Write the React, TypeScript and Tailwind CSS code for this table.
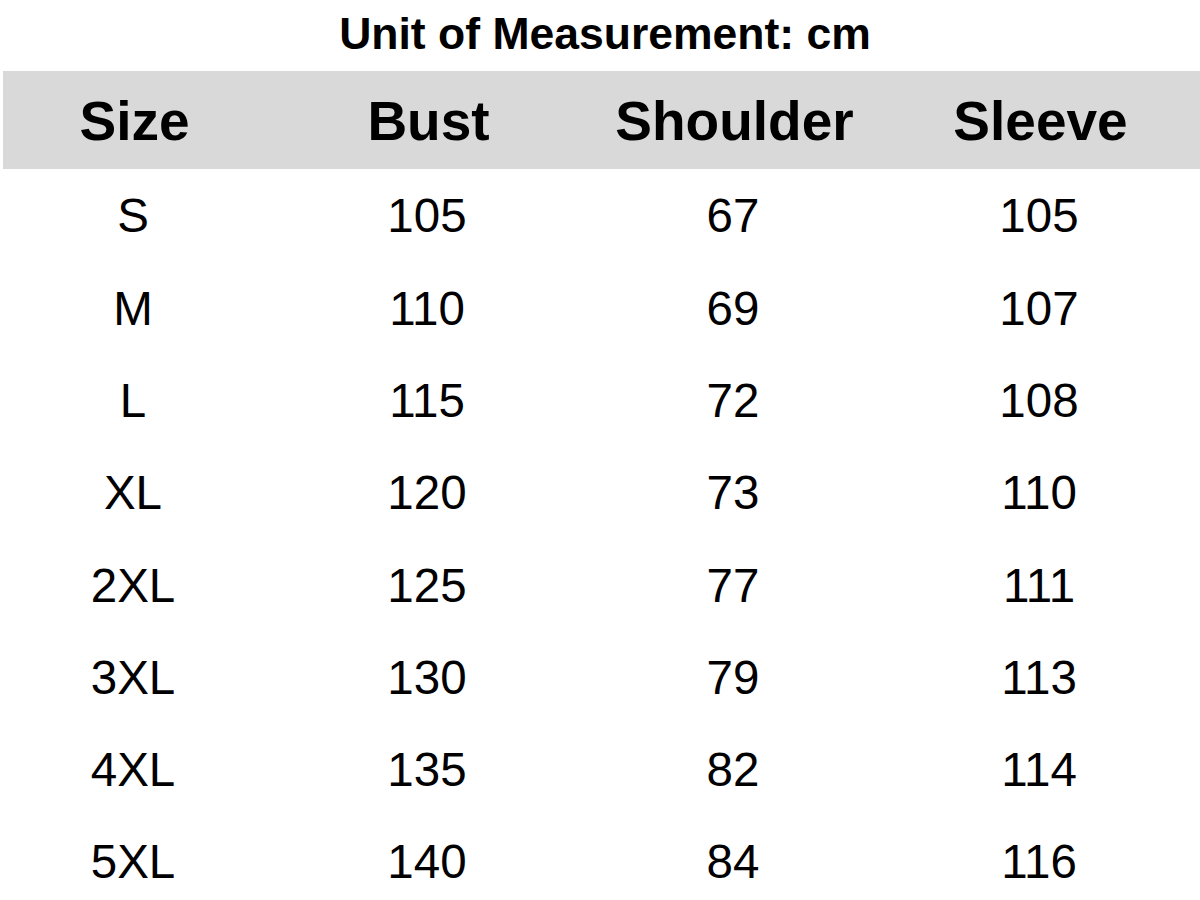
const headers = ["Size", "Bust", "Shoulder", "Sleeve"];

const rows = [
  ["S", "105", "67", "105"],
  ["M", "110", "69", "107"],
  ["L", "115", "72", "108"],
  ["XL", "120", "73", "110"],
  ["2XL", "125", "77", "111"],
  ["3XL", "130", "79", "113"],
  ["4XL", "135", "82", "114"],
  ["5XL", "140", "84", "116"],
];

const grid = "grid grid-cols-[266px_322px_290px_322px]";

const App = () => {
  return (
    <div className="w-[1200px] h-[900px] bg-white text-black overflow-hidden font-['Liberation_Sans',Arial,sans-serif]">
      <div className="h-[71px] flex items-center justify-center pl-[10px] pb-[3px]">
        <p className="text-[44.5px] leading-none font-bold">Unit of Measurement: cm</p>
      </div>

      <div className={`${grid} h-[98px] bg-[#d9d9d9] ml-[3px] -mr-[3px] items-center pt-[3px]`}>
        {headers.map((h) => (
          <p key={h} className="text-[55px] leading-none font-bold text-center -ml-[3px]">
            {h}
          </p>
        ))}
      </div>

      <div className="flex flex-col">
        {rows.map((r) => (
          <div key={r[0]} className={`${grid} h-[92.3px] items-center pt-[2px]`}>
            {r.map((v, i) => (
              <p key={i} className="text-[47.5px] leading-none text-center">
                {v}
              </p>
            ))}
          </div>
        ))}
      </div>
    </div>
  );
};

export default App;
